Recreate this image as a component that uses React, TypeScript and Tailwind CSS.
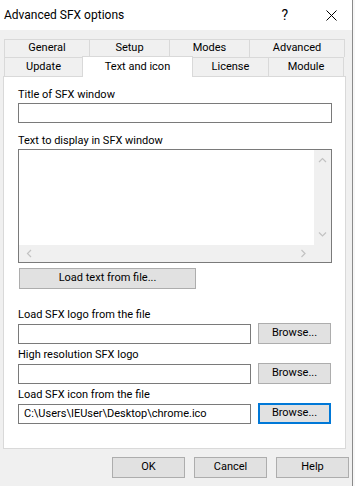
import React from "react";

const font = { fontFamily: "Roboto, 'Liberation Sans', sans-serif" };

// строка вкладки
const Tab = ({ label, w, h }: { label: string; w: string; h: string }) => (
  <div className={`${w} ${h} -ml-px first:ml-0 flex items-center justify-center border-t border-l border-r border-[#d9d9d9] bg-[#f0f0f0] text-[11px] text-black`}>
    {label}
  </div>
);

const WinButton = ({ children, className = "", focused = false }: { children: React.ReactNode; className?: string; focused?: boolean }) => (
  <div
    className={`flex items-center justify-center bg-[#e1e1e1] text-[11px] text-black ${
      focused ? "border-2 border-[#0078d7]" : "border border-[#adadad]"
    } ${className}`}
  >
    {children}
  </div>
);

const Chevron = ({ dir }: { dir: "up" | "down" | "left" | "right" }) => {
  const d = {
    up: "M1 5 L4.5 1.5 L8 5",
    down: "M1 1.5 L4.5 5 L8 1.5",
    left: "M5 1 L1.5 4.5 L5 8",
    right: "M1.5 1 L5 4.5 L1.5 8",
  }[dir];
  const vert = dir === "up" || dir === "down";
  return (
    <svg width={vert ? 9 : 7} height={vert ? 7 : 9} viewBox={vert ? "0 0 9 7" : "0 0 7 9"}>
      <path d={d} fill="none" stroke="#c2c2c2" strokeWidth="1.2" />
    </svg>
  );
};

const FileRow = ({ label, value = "", focused = false }: { label: string; value?: string; focused?: boolean }) => (
  <div className="flex flex-col">
    <div className="h-[14px] leading-[14px] text-[11px] text-black">{label}</div>
    <div className="mt-px flex items-center gap-[7px]">
      <div className="w-[233px] h-[20px] border border-[#7a7a7a] bg-white px-[5px] text-[11px] leading-[18px] text-black whitespace-nowrap overflow-hidden">
        {value}
      </div>
      <WinButton className="w-[73px] h-[21px]" focused={focused}>Browse...</WinButton>
    </div>
  </div>
);

export default function App() {
  return (
    <div className="w-[355px] h-[486px] bg-[#f7f7f7] flex" style={font}>
      <div className="w-[353px] h-[486px] flex flex-col border-r border-[#8a8a8a] bg-[#f0f0f0]">
        {/* заголовок окна */}
        <div className="h-[30px] bg-white flex items-center pl-[4px] pr-[15px]">
          <span className="text-[12px] text-black">Advanced SFX options</span>
          <span className="ml-auto text-[14px] text-black">?</span>
          <svg className="ml-[38px]" width="11" height="11" viewBox="0 0 11 11">
            <path d="M0.5 0.5 L10.5 10.5 M10.5 0.5 L0.5 10.5" stroke="#000" strokeWidth="1" />
          </svg>
        </div>

        <div className="pt-[9px] pl-[3px] w-[346px]">
          {/* вкладки */}
          <div className="flex ml-px">
            <Tab label="General" w="w-[86px]" h="h-[18px]" />
            <Tab label="Setup" w="w-[81px]" h="h-[18px]" />
            <Tab label="Modes" w="w-[81px]" h="h-[18px]" />
            <Tab label="Advanced" w="w-[96px]" h="h-[18px]" />
          </div>
          <div className="flex ml-px h-[19px] items-end">
            <Tab label="Update" w="w-[79px]" h="h-[19px]" />
            <div className="relative z-10 -ml-px w-[111px] h-[21px] -mb-px flex items-start pt-[2px] justify-center border-t border-l border-r border-[#d9d9d9] bg-white text-[11px] text-black">
              Text and icon
            </div>
            <Tab label="License" w="w-[77px]" h="h-[19px]" />
            <Tab label="Module" w="w-[76px]" h="h-[19px]" />
          </div>

          {/* панель */}
          <div className="h-[373px] border border-[#d9d9d9] bg-white pl-[14px] pt-[11px] flex flex-col">
            <div className="h-[14px] leading-[14px] text-[11px] text-black">Title of SFX window</div>
            <div className="mt-px w-[314px] h-[20px] border border-[#7a7a7a] bg-white" />

            <div className="mt-[11px] h-[14px] leading-[14px] text-[11px] text-black">Text to display in SFX window</div>
            <div className="mt-px w-[314px] h-[114px] border border-[#7a7a7a] flex flex-col">
              <div className="flex flex-1">
                <div className="flex-1 bg-white" />
                <div className="w-[17px] bg-[#f0f0f0] flex flex-col items-center justify-between py-[7px]">
                  <Chevron dir="up" />
                  <Chevron dir="down" />
                </div>
              </div>
              <div className="h-[17px] bg-[#f0f0f0] flex items-center justify-between pl-[7px] pr-[24px]">
                <Chevron dir="left" />
                <Chevron dir="right" />
              </div>
            </div>

            <WinButton className="mt-[5px] ml-px w-[177px] h-[21px]">Load text from file...</WinButton>

            <div className="mt-[19px] flex flex-col gap-[4px]">
              <FileRow label="Load SFX logo from the file" />
              <FileRow label="High resolution SFX logo" />
              <FileRow label="Load SFX icon from the file" value="C:\Users\IEUser\Desktop\chrome.ico" focused />
            </div>
          </div>
        </div>

        {/* кнопки диалога */}
        <div className="mt-[8px] flex gap-[9px] pl-[112px]">
          <WinButton className="w-[73px] h-[21px]">OK</WinButton>
          <WinButton className="w-[73px] h-[21px]">Cancel</WinButton>
          <WinButton className="w-[73px] h-[21px]">Help</WinButton>
        </div>
      </div>
    </div>
  );
}
